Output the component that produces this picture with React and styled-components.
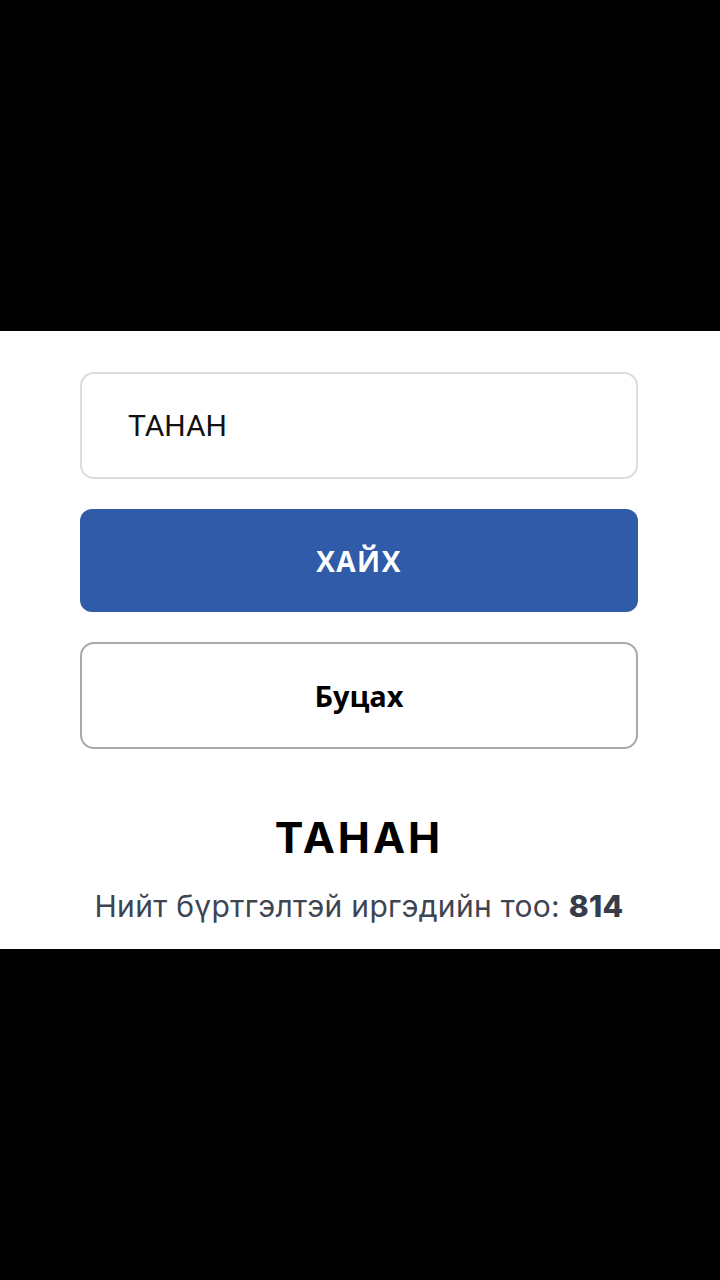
import React, { useState } from 'react';
import styled, { createGlobalStyle } from 'styled-components';

const GlobalStyle = createGlobalStyle`
  html, body {
    margin: 0;
    padding: 0;
    background: #000;
  }
  #root {
    min-height: 100vh;
  }
`;

const Screen = styled.div`
  min-height: 100vh;
  display: flex;
  flex-direction: column;
  justify-content: center;
`;

const Panel = styled.div`
  background: #fff;
  height: 618px;
  box-sizing: border-box;
  padding: 41px 82px 0 80px;
  display: flex;
  flex-direction: column;
`;

const SearchInput = styled.input`
  box-sizing: border-box;
  width: 558px;
  height: 107px;
  border: 2px solid #dcdcdc;
  border-radius: 14px;
  padding: 0 0 0 46px;
  font-family: Roboto, "Noto Sans", sans-serif;
  font-size: 30px;
  color: #111;
  outline: none;
  background: #fff;
`;

const Button = styled.button`
  box-sizing: border-box;
  width: 558px;
  height: ${(p) => (p.primary ? '103px' : '107px')};
  margin-top: 30px;
  border-radius: ${(p) => (p.primary ? '12px' : '14px')};
  border: ${(p) => (p.primary ? 'none' : '2px solid #a9a9ad')};
  background: ${(p) => (p.primary ? '#2f5ba8' : '#fff')};
  color: ${(p) => (p.primary ? '#fff' : '#000')};
  font-family: "Open Sans", "Noto Sans", sans-serif;
  font-weight: 700;
  font-size: ${(p) => (p.primary ? '28px' : '29px')};
  letter-spacing: ${(p) => (p.primary ? '1.5px' : '0')};
  cursor: pointer;
`;

const Result = styled.div`
  margin-top: 62px;
  display: flex;
  flex-direction: column;
  align-items: center;
  font-family: Inter, Roboto, sans-serif;
`;

const Name = styled.h2`
  margin: 0;
  font-size: 43px;
  font-weight: 700;
  letter-spacing: 3px;
  color: #000;
  line-height: 52px;
`;

const Count = styled.p`
  margin: 25px 0 0;
  font-size: 30px;
  color: #3e4452;
  line-height: 36px;
  letter-spacing: 0.3px;

  & > b {
    font-weight: 800;
    color: #363c4a;
  }
`;

export default function App() {
  const [query, setQuery] = useState('ТАНАН');

  return (
    <Screen>
      <GlobalStyle />
      <Panel>
        <SearchInput value={query} onChange={(e) => setQuery(e.target.value)} />
        <Button primary>ХАЙХ</Button>
        <Button>Буцах</Button>
        <Result>
          <Name>ТАНАН</Name>
          <Count>
            Нийт бүртгэлтэй иргэдийн тоо: <b>814</b>
          </Count>
        </Result>
      </Panel>
    </Screen>
  );
}
